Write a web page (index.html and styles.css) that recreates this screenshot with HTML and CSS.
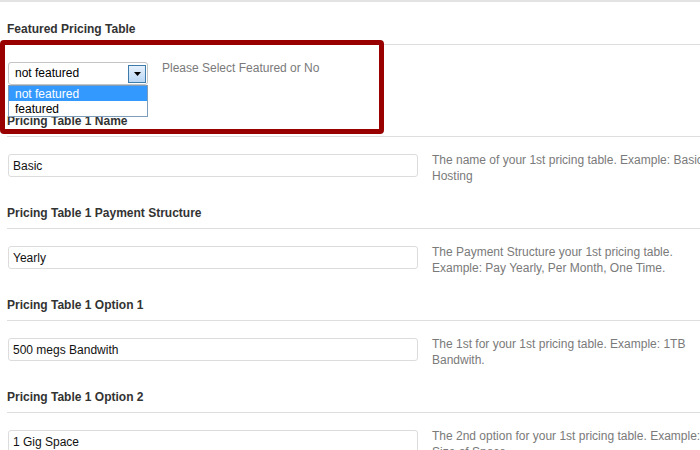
FILE: index.html
```html
<!DOCTYPE html>
<html>
<head>
<meta charset="utf-8">
<link rel="stylesheet" href="styles.css">
</head>
<body>
<div class="topline"></div>
<div class="form">
  <section class="field">
    <h3 class="label">Featured Pricing Table</h3>
    <div class="row">
      <div class="select">
        <span class="select-text">not featured</span>
        <span class="arrow"><svg width="7" height="4" viewBox="0 0 7 4"><path d="M0 0H7L3.5 4Z" fill="#000"/></svg></span>
        <ul class="options">
          <li class="opt active">not featured</li>
          <li class="opt">featured</li>
        </ul>
      </div>
      <p class="desc">Please Select Featured or No</p>
    </div>
  </section>
  <section class="field">
    <h3 class="label">Pricing Table 1 Name</h3>
    <div class="row">
      <input class="text" type="text" value="Basic">
      <p class="desc">The name of your 1st pricing table. Example: Basic Hosting</p>
    </div>
  </section>
  <section class="field">
    <h3 class="label">Pricing Table 1 Payment Structure</h3>
    <div class="row">
      <input class="text" type="text" value="Yearly">
      <p class="desc">The Payment Structure your 1st pricing table. Example: Pay Yearly, Per Month, One Time.</p>
    </div>
  </section>
  <section class="field">
    <h3 class="label">Pricing Table 1 Option 1</h3>
    <div class="row">
      <input class="text" type="text" value="500 megs Bandwith">
      <p class="desc">The 1st for your 1st pricing table. Example: 1TB Bandwith.</p>
    </div>
  </section>
  <section class="field">
    <h3 class="label">Pricing Table 1 Option 2</h3>
    <div class="row">
      <input class="text" type="text" value="1 Gig Space">
      <p class="desc">The 2nd option for your 1st pricing table. Example: Size of Space</p>
    </div>
  </section>
</div>
<div class="highlight"></div>
</body>
</html>
```
FILE: styles.css
```css
html, body {
  margin: 0;
  padding: 0;
  overflow: hidden;
  background: #fff;
}
body {
  width: 700px;
  height: 450px;
  position: relative;
  font-family: "Liberation Sans", Arial, sans-serif;
  font-size: 12px;
  color: #333;
}
.topline {
  height: 2px;
  background: #e3e3e3;
}
.form {
  padding: 20px 0 0 7px;
}
.field {
  margin: 0;
}
.label {
  margin: 0;
  font-size: 12px;
  font-weight: bold;
  line-height: 15px;
  color: #333;
  padding-bottom: 7px;
  border-bottom: 1px solid #dedede;
}
.row {
  display: flex;
  align-items: flex-start;
  height: 32px;
  margin: 17px 0 20px 1px;
}
.text {
  flex: none;
  box-sizing: border-box;
  width: 410px;
  height: 23px;
  margin: 0;
  padding: 0 4px;
  border: 1px solid #dcdcdc;
  border-radius: 3px;
  font-family: "Liberation Sans", Arial, sans-serif;
  font-size: 12px;
  color: #111;
  background: #fff;
  outline: none;
}
.desc {
  flex: none;
  width: 285px;
  margin: -2px 0 0 14px;
  line-height: 16px;
  color: #7a7a7a;
}
.select {
  flex: none;
  position: relative;
  box-sizing: border-box;
  width: 140px;
  height: 23px;
  border: 1px solid #c4c4c4;
  border-radius: 3px;
  display: flex;
  align-items: center;
  background: #fff;
}
.select-text {
  flex: 1;
  padding: 0 0 0 6px;
  line-height: 15px;
  color: #000;
}
.arrow {
  box-sizing: border-box;
  width: 18px;
  height: 18px;
  margin-right: 1px;
  border: 1px solid #3d7bad;
  background: linear-gradient(#e6f1fc, #bad7f5);
  display: flex;
  align-items: center;
  justify-content: center;
}
.arrow svg {
  display: block;
}
.options {
  position: absolute;
  left: -1px;
  top: 22px;
  box-sizing: border-box;
  width: 140px;
  margin: 0;
  padding: 0;
  list-style: none;
  border: 1px solid #7f9db9;
  background: #fff;
  z-index: 2;
}
.opt {
  height: 15px;
  line-height: 16px;
  padding-left: 6px;
  color: #000;
}
.opt.active {
  background: #3399ff;
  color: #fff;
}
.highlight {
  position: absolute;
  left: 0;
  top: 40px;
  box-sizing: border-box;
  width: 384px;
  height: 94px;
  border: 5px solid #990000;
  border-radius: 4px;
  z-index: 3;
}
```
